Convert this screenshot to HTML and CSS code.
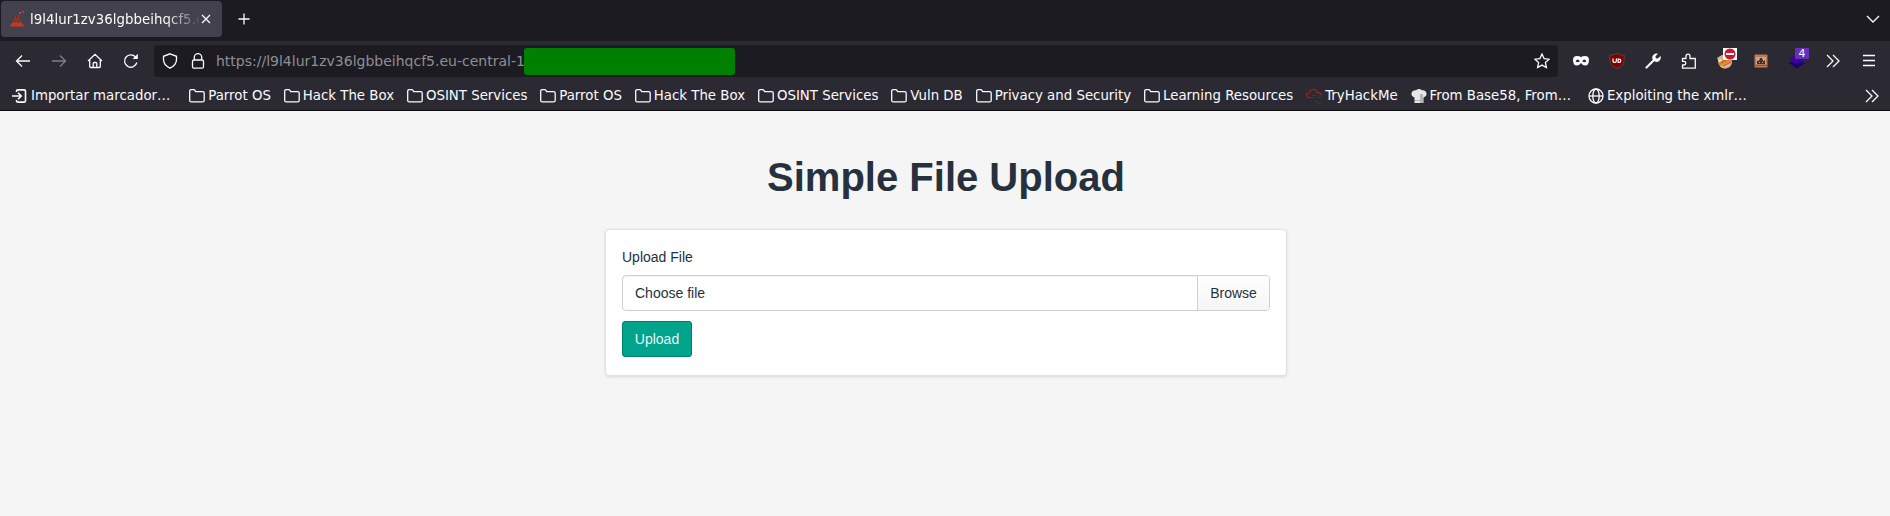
FILE: index.html
```html
<!DOCTYPE html>
<html lang="en">
<head>
<meta charset="utf-8">
<title>Simple File Upload</title>
<link rel="stylesheet" href="styles.css">
</head>
<body>
<svg class="defs" width="0" height="0">
<symbol id="folder" viewBox="0 0 16 16"><path d="M.7 3.2q0-1.500 1.500-1.500h2.600q.7 0 1.100.6l.8 1.300h7q1.500 0 1.500 1.500v7.300q0 1.500-1.500 1.500H2.200Q.7 13.900.7 12.400Z"/></symbol>
<symbol id="more" viewBox="0 0 16 16"><path d="M2 2l6 6-6 6M8 2l6 6-6 6"/></symbol>
</svg>
<header class="browser">
<div class="tabbar">
<div class="tab">
<svg class="ico" viewBox="0 0 16 16"><path fill="none" stroke="#a83420" stroke-width="1.200" d="M6.500 5v3L2.500 14.500h11L9.500 8V5"/><path fill="#c43a20" d="M3.500 11.500h9l3 4H.5z"/><path fill="#8d2b1c" d="M5 4h6v1.500H5zM7 7h2v2H7z"/><path fill="#d04024" d="M10 1h2v2h-2zM13 0h2v1.500h-2z"/><path fill="#a83420" d="M7 9h1v2H7z"/></svg>
<span class="tab-title">l9l4lur1zv36lgbbeihqcf5.e</span>
<svg class="close line" viewBox="0 0 10 10"><path d="M1 1l8 8M9 1l-8 8"/></svg>
</div>
<svg class="plus line" viewBox="0 0 12 12"><path d="M6 .5v11M.5 6h11"/></svg>
<svg class="chevron line" viewBox="0 0 14 8"><path d="M1 1l6 6 6-6"/></svg>
</div>
<nav class="toolbar">
<div class="nav-buttons">
<svg class="ico line" viewBox="0 0 16 16"><path d="M15 8H1.500M7 2.500L1.500 8 7 13.500"/></svg>
<svg class="ico line dim" viewBox="0 0 16 16"><path d="M1 8h13.500M9 2.500L14.500 8 9 13.500"/></svg>
<svg class="ico line" viewBox="0 0 16 16"><path d="M1 8l7-6.700L15 8M2.700 6.500v7q0 1 1 1h8.600q1 0 1-1v-7M6.200 14.500v-4q0-1 1-1h1.600q1 0 1 1v4"/></svg>
<svg class="ico line" viewBox="0 0 16 16"><path d="M13.800 9.500A6.200 6.200 0 1 1 12.500 4"/><path fill="#fbfbfe" stroke="none" d="M14.800.8V6H9.500z"/></svg>
</div>
<div class="urlbar">
<svg class="ico line" viewBox="0 0 16 16"><path d="M8 .8l6.500 2.500v3.200q0 5.500-6.500 8.700Q1.500 12 1.500 6.500V3.300z"/></svg>
<svg class="ico line lock" viewBox="0 0 16 16"><path d="M4.300 7V4.300a3.700 3.700 0 0 1 7.400 0V7"/><rect x="2.500" y="7" width="11" height="8.200" rx="1.500"/></svg>
<span class="url">https://l9l4lur1zv36lgbbeihqcf5.eu-central-1</span>
<span class="redacted"></span>
<svg class="ico line star" viewBox="0 0 16 16"><path d="M8 1l2.100 4.600 5 .6-3.700 3.400 1 5L8 12.100l-4.400 2.500 1-5L.9 6.200l5-.6z"/></svg>
</div>
<div class="extensions">
<svg class="ico" viewBox="0 0 16 16"><path fill="#fbfbfe" fill-rule="evenodd" d="M0 7q0-4 4-4 3 0 4 1.200Q9 3 12 3q4 0 4 4 0 5.500-4 5.500-2 0-4-2.500-2 2.500-4 2.500Q0 12.500 0 7zm2.600 1.200q2 2 4.200 0Q4.700 5 2.600 8.200zm6.600 0q2.200 2 4.200 0-2-3.200-4.200 0z"/></svg>
<svg class="ico" viewBox="0 0 16 16"><path fill="#800000" stroke="#5b4146" d="M8 .3Q11 2.300 15.300 2.300q0 6-.8 8-1.200 2.800-6.500 5.400-5.300-2.600-6.500-5.400-.8-2-.8-8Q5 2.300 8 .3z"/><path fill="none" stroke="#fff" stroke-width="1.200" d="M4 5.500v2q0 2 1.700 2t1.700-2v-2M9.100 6.100h1q1.700 0 1.700 1.600t-1.700 1.600h-1z"/></svg>
<svg class="ico" viewBox="0 0 16 16"><path stroke="#fbfbfe" stroke-width="2.200" stroke-linecap="round" d="M1.500 14.500L9 7"/><path fill="#fbfbfe" d="M13 .7L10.500 3.200l.3 2 2 .3L15.500 3q1 3.200-1.300 5-2 1.500-4.300.5L7.500 6.200Q6.600 4 8.300 2 10.200 0 13 .7z"/></svg>
<svg class="ico line" viewBox="0 0 16 16"><path stroke-linejoin="round" d="M1.500 5.500H5V3.200a2 2 0 0 1 4 0v2.300h5.300v9.700H1.500V12H3a1.800 1.800 0 0 0 0-3.600H1.500z"/></svg>
<span class="badged">
<svg class="ico" viewBox="0 0 16 16"><circle cx="8" cy="8.500" r="7" fill="#e9872d"/><path fill="#dfb184" d="M0 5l5-3 5 1-8 6zM3 13l12-5q0 7-7 7.500-3 0-5-2.500z"/><path stroke="#8d5f38" d="M4 10l8-5M6 13l8-4"/><path fill="#dce7ec" d="M1 7l3-1 1 2-3 1z"/></svg>
<svg class="blocked" viewBox="0 0 14 12"><rect width="14" height="12" fill="#fff"/><circle cx="7" cy="6" r="5.500" fill="#cc1836"/><path fill="#fff" d="M3 5h8v2H3z"/></svg>
</span>
<svg class="ico" viewBox="0 0 16 16"><rect x="1.500" y="1.500" width="13" height="13" rx="1" fill="#bb7954"/><path fill="#d3a387" d="M3 4h10v7H3z"/><path fill="#40302a" d="M4 7l1 1h1l1-3h2l1 3h1l1-1v4H4z"/><path fill="#d3a387" d="M6 9h1v1H6zM9 9h1v1H9z"/><path fill="#8f5637" d="M2 12h12v1H2z"/></svg>
<span class="badged">
<svg class="ico" viewBox="0 0 16 16"><path fill="#1e006e" d="M0 10l8-4 8 4-8 5.800z"/><path fill="#3c00a0" d="M0 6.500L8 1l8 5.500-8 5z"/></svg>
<span class="count">4</span>
</span>
<svg class="ico line" viewBox="0 0 16 16"><use href="#more"/></svg>
<svg class="ico line menu" viewBox="0 0 16 16"><path d="M2 2.500h12M2 7.500h12M2 12.500h12"/></svg>
</div>
</nav>
<div class="bookmarks">
<a class="bm import"><svg class="ico line" viewBox="0 0 16 16"><path stroke-width="1.600" d="M0 8h9M6 4.700L9.300 8 6 11.300M4.500 4V3.200q0-1.300 1.300-1.300h6.400q1.300 0 1.300 1.300v9.600q0 1.300-1.300 1.300H5.800q-1.300 0-1.300-1.300V12"/></svg><span>Importar marcador…</span></a>
<a class="bm"><svg class="ico line"><use href="#folder"/></svg><span>Parrot OS</span></a>
<a class="bm"><svg class="ico line"><use href="#folder"/></svg><span>Hack The Box</span></a>
<a class="bm"><svg class="ico line"><use href="#folder"/></svg><span>OSINT Services</span></a>
<a class="bm"><svg class="ico line"><use href="#folder"/></svg><span>Parrot OS</span></a>
<a class="bm"><svg class="ico line"><use href="#folder"/></svg><span>Hack The Box</span></a>
<a class="bm"><svg class="ico line"><use href="#folder"/></svg><span>OSINT Services</span></a>
<a class="bm"><svg class="ico line"><use href="#folder"/></svg><span>Vuln DB</span></a>
<a class="bm"><svg class="ico line"><use href="#folder"/></svg><span>Privacy and Security</span></a>
<a class="bm"><svg class="ico line"><use href="#folder"/></svg><span>Learning Resources</span></a>
<a class="bm"><svg class="ico" viewBox="0 0 16 16"><path fill="none" stroke="#c01418" stroke-width="1.200" d="M5.500 9.500H3Q.5 9.500.5 7.200T3.500 5Q4 1.500 7.500 1.500T11.500 5q3.500-.8 4 2.500"/><path stroke="#8d171d" d="M6 7.500h4M11 9.500h4M6 9.500h3M9 13.500h3M12 15.500h3"/></svg><span>TryHackMe</span></a>
<a class="bm"><svg class="ico" viewBox="0 0 16 16"><path fill="#e6e6e6" d="M3.500 15V9.500Q0 8.500.5 5 1.500 1.500 5 2.300 8-.5 11 2.300q3.500-.8 4.500 2.700.5 3.500-3 4.500V15z"/><path fill="#b5b5b5" d="M9 6h3v9H9zM4 12h8v1H4z"/></svg><span>From Base58, From…</span></a>
<a class="bm globe"><svg class="ico line" viewBox="0 0 16 16"><circle cx="8" cy="8" r="7"/><ellipse cx="8" cy="8" rx="3.200" ry="7"/><path d="M1 8h14"/></svg><span>Exploiting the xmlr…</span></a>
<svg class="ico line overflow" viewBox="0 0 16 16"><use href="#more"/></svg>
</div>
</header>
<main class="page">
<h1>Simple File Upload</h1>
<form class="card">
<label class="label">Upload File</label>
<div class="file"><span class="file-name">Choose file</span><span class="browse">Browse</span></div>
<button class="upload" type="button">Upload</button>
</form>
</main>
</body>
</html>
```
FILE: styles.css
```css
* { box-sizing: border-box; }
body { margin: 0; height: 516px; overflow: hidden; background: #f5f5f5; font-family: "Liberation Sans", Arial, sans-serif; font-size: 14px; color: #27313e; }
svg { display: block; flex: none; }
.defs { position: absolute; }
.browser { height: 111px; background: #2b2a33; color: #fbfbfe; border-bottom: 1px solid #0c0c0d; font-family: "DejaVu Sans", sans-serif; font-size: 13.33px; white-space: nowrap; }
.ico { width: 16px; height: 16px; }
.line { fill: none; stroke: #fbfbfe; stroke-width: 1.3; }
.dim { opacity: .4; }
.tabbar { height: 41px; background: #1c1b22; display: flex; align-items: center; padding: 0 10px 3px 1px; }
.tab { width: 221px; height: 36px; border-radius: 4px; background: #42414d; display: flex; align-items: center; padding: 0 11px 0 8px; }
.tab-title { width: 169px; margin-left: 5px; letter-spacing: .04px; mask-image: linear-gradient(90deg, #000 135px, transparent 172px); }
.close { width: 10px; height: 10px; margin-left: auto; }
.plus { width: 12px; height: 12px; margin-left: 16px; }
.chevron { width: 14px; height: 8px; margin-left: auto; }
.toolbar { height: 40px; display: flex; align-items: center; padding: 0 13px 0 15px; }
.nav-buttons { display: flex; gap: 20px; width: 139px; }
.urlbar { width: 1404px; height: 32px; border-radius: 4px; background: #1c1b22; display: flex; align-items: center; padding: 0 8px; }
.lock { margin-left: 12px; }
.url { width: 308px; margin-left: 10px; padding-bottom: 1px; color: #8f8f95; font-size: 14px; }
.redacted { width: 211px; height: 27px; border-radius: 3px; background: #008000; }
.star { margin-left: auto; }
.extensions { display: flex; margin-left: 15px; gap: 20px; }
.badged { position: relative; }
.blocked { position: absolute; left: 6px; top: -5px; width: 14px; height: 12px; }
.count { position: absolute; left: 6px; top: -5px; width: 14px; height: 11px; background: #6330bc; border-radius: 1px; font-size: 11px; line-height: 11px; text-align: center; }
.bookmarks { height: 29px; display: flex; align-items: center; padding-left: 12px; gap: 12.9px; }
.bm { display: flex; align-items: center; gap: 3px; }
.import { margin-right: 6px; }
.globe { margin-left: 4px; }
.overflow { margin-left: auto; margin-right: 10px; }
.page { display: flex; flex-direction: column; align-items: center; padding: 43px 0 0 2px; }
h1 { margin: 0; font-size: 40px; line-height: 46px; }
.card { width: 682px; height: 147px; margin-top: 29px; padding: 17px 16px; background: #fff; border: 1px solid #dfe1e2; border-radius: 4px; box-shadow: 0 1px 3px rgba(16,22,26,.12); }
.label { display: block; height: 28px; line-height: 20px; }
.file { display: flex; height: 36px; line-height: 34px; border: 1px solid #ced1d3; border-radius: 4px; box-shadow: inset 0 1px 1px rgba(16,22,26,.06); }
.file-name { flex: 1; padding-left: 12px; }
.browse { width: 72px; text-align: center; border-left: 1px solid #ced1d3; background: linear-gradient(#fff, #f5f5f5); border-radius: 0 3px 3px 0; }
.upload { display: block; margin-top: 10px; width: 70px; height: 36px; border: 1px solid #008069; border-radius: 3px; background: #00a38b; color: #e8f5f2; font: inherit; padding: 0; }
```
